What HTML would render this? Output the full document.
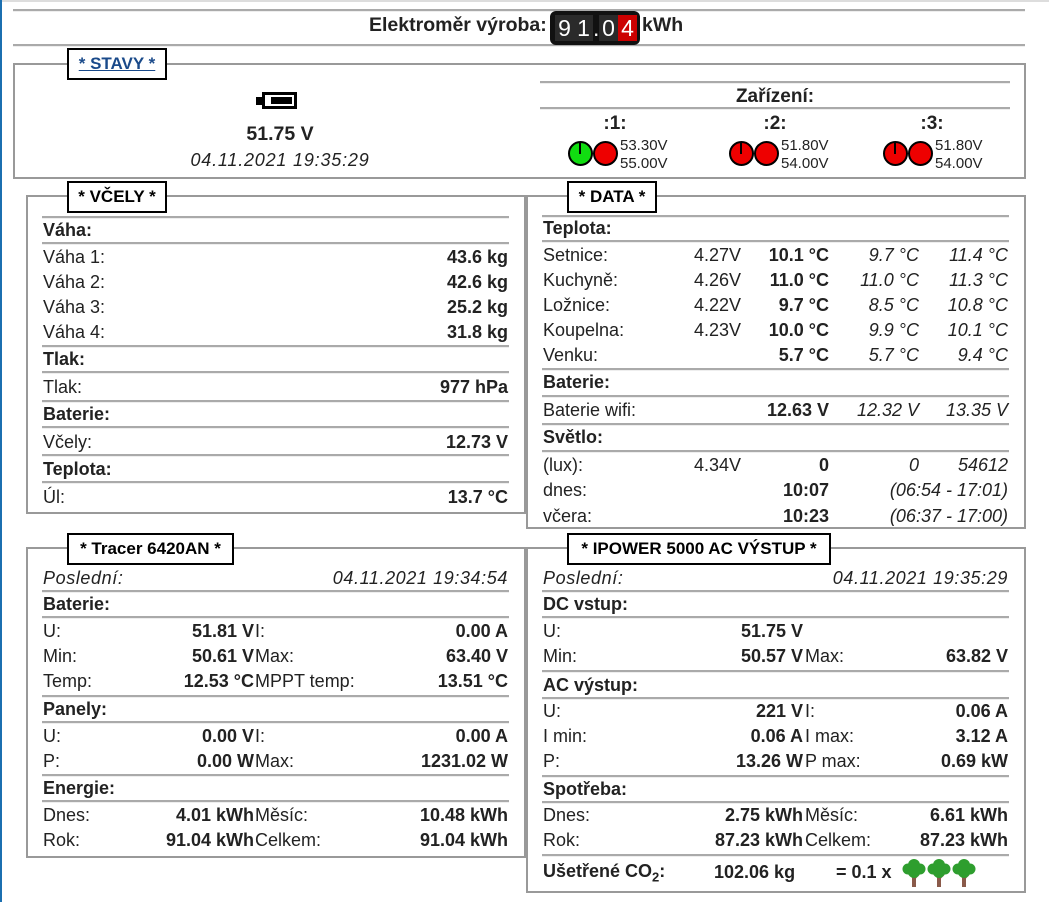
<!DOCTYPE html>
<html><head><meta charset="utf-8"><style>
body{margin:0;width:1049px;height:902px;position:relative;background:#fff;font-family:"Liberation Sans",Arial,sans-serif;color:#222;overflow:hidden}
.t{position:absolute;font-size:18px;line-height:25px;white-space:nowrap}
.r{text-align:right}
b,.b{font-weight:bold}
.i{font-style:italic}
.box{position:absolute;border:2px solid #999;box-sizing:border-box}
.lg{position:absolute;border:2px solid #000;background:#fff;box-sizing:border-box;font-weight:bold;font-size:17px;text-align:center;line-height:27px;color:#000}
.hl{position:absolute;height:2px;background:#aaa;border-bottom:1px solid #eee}
.h{font-weight:bold;color:#222}
.dot{position:absolute;width:21px;height:21px;border:2px solid #000;border-radius:50%;box-sizing:content-box}
.dot.p:after{content:"";position:absolute;left:9px;top:0;width:2px;height:11px;background:#000}
.sm{position:absolute;font-size:15px;line-height:18px}
.pd{font-size:18px;letter-spacing:0.6px}
</style></head><body>
<div style="position:absolute;left:0;top:0;width:2px;height:902px;background:#1b6fb0"></div>
<div style="position:absolute;left:2px;top:0;width:1047px;height:2px;background:#ddd"></div>
<div class="hl" style="left:13px;width:1012px;top:9px"></div>
<div class="hl" style="left:13px;width:1012px;top:44px"></div>
<div class="t b" style="left:369px;top:13px;font-size:19.5px">Elektroměr výroba:</div>
<div style="position:absolute;left:550px;top:11px;width:90px;height:34px;background:#111;border-radius:6px"></div>
<div style="position:absolute;left:555px;top:15px;height:26px;font-size:23px;line-height:26px;color:#fff;font-family:'Liberation Sans',sans-serif">
<span style="display:inline-block;width:19px;text-align:center;background:#2a2a2a">9</span><span style="display:inline-block;width:19px;text-align:center;background:#2a2a2a">1</span><span style="display:inline-block;width:6px">.</span><span style="display:inline-block;width:19px;text-align:center;background:#2a2a2a">0</span><span style="display:inline-block;width:19px;text-align:center;background:#c00">4</span></div>
<div class="t b" style="left:642px;top:13px;font-size:19.5px">kWh</div>

<!-- STAVY -->
<div class="box" style="left:13px;top:63px;width:1013px;height:116px"></div>
<div class="lg" style="left:67px;top:48px;width:100px;height:32px"><span style="color:#1a4a8a;text-decoration:underline">* STAVY *</span></div>
<div style="position:absolute;left:256px;top:97px;width:7px;height:8px;background:#000"></div>
<div style="position:absolute;left:262px;top:92px;width:35px;height:17px;background:#000"></div>
<div style="position:absolute;left:265px;top:95px;width:29px;height:11px;background:#fff"></div>
<div style="position:absolute;left:271px;top:97px;width:21px;height:7px;background:#000"></div>
<div class="t b" style="left:200px;width:160px;text-align:center;top:122px;font-size:19.5px">51.75 V</div>
<div class="t i" style="left:150px;width:260px;text-align:center;top:148px;font-size:18px;letter-spacing:0.8px">04.11.2021 19:35:29</div>
<div class="hl" style="left:540px;width:470px;top:81px"></div>
<div class="hl" style="left:540px;width:470px;top:107px"></div>
<div class="t b" style="left:540px;width:470px;text-align:center;top:84px;font-size:19px">Zařízení:</div>
<div class="t b" style="left:585px;width:60px;text-align:center;top:111px;font-size:19px">:1:</div>
<div class="t b" style="left:745px;width:60px;text-align:center;top:111px;font-size:19px">:2:</div>
<div class="t b" style="left:902px;width:60px;text-align:center;top:111px;font-size:19px">:3:</div>
<div class="dot p" style="left:568px;top:141px;background:#1d1"></div>
<div class="dot" style="left:593px;top:141px;background:#e00"></div>
<div class="sm" style="left:620px;top:137px">53.30V<br>55.00V</div>
<div class="dot p" style="left:729px;top:141px;background:#e00"></div>
<div class="dot" style="left:754px;top:141px;background:#e00"></div>
<div class="sm" style="left:781px;top:137px">51.80V<br>54.00V</div>
<div class="dot p" style="left:883px;top:141px;background:#e00"></div>
<div class="dot" style="left:908px;top:141px;background:#e00"></div>
<div class="sm" style="left:935px;top:137px">51.80V<br>54.00V</div>

<!-- VCELY -->
<div class="box" style="left:26px;top:195px;width:500px;height:319px"></div>
<div class="lg" style="left:67px;top:181px;width:100px;height:32px">* VČELY *</div>
<div class="hl" style="left:42px;width:467px;top:216px"></div>
<div class="t h" style="left:43px;top:218px">Váha:</div>
<div class="hl" style="left:42px;width:467px;top:242px"></div>
<div class="t" style="left:43px;top:245px">Váha 1:</div><div class="t b r" style="right:541px;top:245px">43.6 kg</div>
<div class="t" style="left:43px;top:270px">Váha 2:</div><div class="t b r" style="right:541px;top:270px">42.6 kg</div>
<div class="t" style="left:43px;top:295px">Váha 3:</div><div class="t b r" style="right:541px;top:295px">25.2 kg</div>
<div class="t" style="left:43px;top:320px">Váha 4:</div><div class="t b r" style="right:541px;top:320px">31.8 kg</div>
<div class="hl" style="left:42px;width:467px;top:345px"></div>
<div class="t h" style="left:43px;top:347px">Tlak:</div>
<div class="hl" style="left:42px;width:467px;top:371px"></div>
<div class="t" style="left:43px;top:375px">Tlak:</div><div class="t b r" style="right:541px;top:375px">977 hPa</div>
<div class="hl" style="left:42px;width:467px;top:400px"></div>
<div class="t h" style="left:43px;top:402px">Baterie:</div>
<div class="hl" style="left:42px;width:467px;top:426px"></div>
<div class="t" style="left:43px;top:430px">Včely:</div><div class="t b r" style="right:541px;top:430px">12.73 V</div>
<div class="hl" style="left:42px;width:467px;top:454px"></div>
<div class="t h" style="left:43px;top:457px">Teplota:</div>
<div class="hl" style="left:42px;width:467px;top:481px"></div>
<div class="t" style="left:43px;top:485px">Úl:</div><div class="t b r" style="right:541px;top:485px">13.7 °C</div>

<!-- DATA -->
<div class="box" style="left:526px;top:195px;width:500px;height:334px"></div>
<div class="lg" style="left:567px;top:181px;width:90px;height:32px">* DATA *</div>
<div class="hl" style="left:542px;width:467px;top:215px"></div>
<div class="t h" style="left:543px;top:216px">Teplota:</div>
<div class="hl" style="left:542px;width:467px;top:240px"></div>
<div class="t" style="left:543px;top:243px">Setnice:</div><div class="t r" style="right:308px;top:243px">4.27V</div><div class="t b r" style="right:220px;top:243px">10.1 °C</div><div class="t i r" style="right:130px;top:243px">9.7 °C</div><div class="t i r" style="right:41px;top:243px">11.4 °C</div>
<div class="t" style="left:543px;top:268px">Kuchyně:</div><div class="t r" style="right:308px;top:268px">4.26V</div><div class="t b r" style="right:220px;top:268px">11.0 °C</div><div class="t i r" style="right:130px;top:268px">11.0 °C</div><div class="t i r" style="right:41px;top:268px">11.3 °C</div>
<div class="t" style="left:543px;top:293px">Ložnice:</div><div class="t r" style="right:308px;top:293px">4.22V</div><div class="t b r" style="right:220px;top:293px">9.7 °C</div><div class="t i r" style="right:130px;top:293px">8.5 °C</div><div class="t i r" style="right:41px;top:293px">10.8 °C</div>
<div class="t" style="left:543px;top:318px">Koupelna:</div><div class="t r" style="right:308px;top:318px">4.23V</div><div class="t b r" style="right:220px;top:318px">10.0 °C</div><div class="t i r" style="right:130px;top:318px">9.9 °C</div><div class="t i r" style="right:41px;top:318px">10.1 °C</div>
<div class="t" style="left:543px;top:343px">Venku:</div><div class="t b r" style="right:220px;top:343px">5.7 °C</div><div class="t i r" style="right:130px;top:343px">5.7 °C</div><div class="t i r" style="right:41px;top:343px">9.4 °C</div>
<div class="hl" style="left:542px;width:467px;top:368px"></div>
<div class="t h" style="left:543px;top:370px">Baterie:</div>
<div class="hl" style="left:542px;width:467px;top:395px"></div>
<div class="t" style="left:543px;top:398px">Baterie wifi:</div><div class="t b r" style="right:220px;top:398px">12.63 V</div><div class="t i r" style="right:130px;top:398px">12.32 V</div><div class="t i r" style="right:41px;top:398px">13.35 V</div>
<div class="hl" style="left:542px;width:467px;top:423px"></div>
<div class="t h" style="left:543px;top:425px">Světlo:</div>
<div class="hl" style="left:542px;width:467px;top:450px"></div>
<div class="t" style="left:543px;top:453px">(lux):</div><div class="t r" style="right:308px;top:453px">4.34V</div><div class="t b r" style="right:220px;top:453px">0</div><div class="t i r" style="right:130px;top:453px">0</div><div class="t i r" style="right:41px;top:453px">54612</div>
<div class="t" style="left:543px;top:478px">dnes:</div><div class="t b r" style="right:220px;top:478px">10:07</div><div class="t i r" style="right:41px;top:478px">(06:54 - 17:01)</div>
<div class="t" style="left:543px;top:504px">včera:</div><div class="t b r" style="right:220px;top:504px">10:23</div><div class="t i r" style="right:41px;top:504px">(06:37 - 17:00)</div>

<!-- TRACER -->
<div class="box" style="left:26px;top:547px;width:500px;height:311px"></div>
<div class="lg" style="left:67px;top:533px;width:167px;height:32px">* Tracer 6420AN *</div>
<div class="t i pd" style="left:43px;top:566px">Poslední:</div><div class="t i r pd" style="right:541px;top:566px">04.11.2021 19:34:54</div>
<div class="hl" style="left:42px;width:467px;top:590px"></div>
<div class="t h" style="left:43px;top:592px">Baterie:</div>
<div class="hl" style="left:42px;width:467px;top:616px"></div>
<div class="t" style="left:43px;top:619px">U:</div><div class="t b r" style="right:795px;top:619px">51.81 V</div><div class="t" style="left:255px;top:619px">I:</div><div class="t b r" style="right:541px;top:619px">0.00 A</div>
<div class="t" style="left:43px;top:644px">Min:</div><div class="t b r" style="right:795px;top:644px">50.61 V</div><div class="t" style="left:255px;top:644px">Max:</div><div class="t b r" style="right:541px;top:644px">63.40 V</div>
<div class="t" style="left:43px;top:669px">Temp:</div><div class="t b r" style="right:795px;top:669px">12.53 °C</div><div class="t" style="left:255px;top:669px">MPPT temp:</div><div class="t b r" style="right:541px;top:669px">13.51 °C</div>
<div class="hl" style="left:42px;width:467px;top:695px"></div>
<div class="t h" style="left:43px;top:697px">Panely:</div>
<div class="hl" style="left:42px;width:467px;top:721px"></div>
<div class="t" style="left:43px;top:724px">U:</div><div class="t b r" style="right:795px;top:724px">0.00 V</div><div class="t" style="left:255px;top:724px">I:</div><div class="t b r" style="right:541px;top:724px">0.00 A</div>
<div class="t" style="left:43px;top:749px">P:</div><div class="t b r" style="right:795px;top:749px">0.00 W</div><div class="t" style="left:255px;top:749px">Max:</div><div class="t b r" style="right:541px;top:749px">1231.02 W</div>
<div class="hl" style="left:42px;width:467px;top:774px"></div>
<div class="t h" style="left:43px;top:776px">Energie:</div>
<div class="hl" style="left:42px;width:467px;top:800px"></div>
<div class="t" style="left:43px;top:803px">Dnes:</div><div class="t b r" style="right:795px;top:803px">4.01 kWh</div><div class="t" style="left:255px;top:803px">Měsíc:</div><div class="t b r" style="right:541px;top:803px">10.48 kWh</div>
<div class="t" style="left:43px;top:828px">Rok:</div><div class="t b r" style="right:795px;top:828px">91.04 kWh</div><div class="t" style="left:255px;top:828px">Celkem:</div><div class="t b r" style="right:541px;top:828px">91.04 kWh</div>

<!-- IPOWER -->
<div class="box" style="left:526px;top:547px;width:500px;height:346px"></div>
<div class="lg" style="left:567px;top:533px;width:264px;height:32px">* IPOWER 5000 AC VÝSTUP *</div>
<div class="t i pd" style="left:543px;top:566px">Poslední:</div><div class="t i r pd" style="right:41px;top:566px">04.11.2021 19:35:29</div>
<div class="hl" style="left:542px;width:467px;top:590px"></div>
<div class="t h" style="left:543px;top:592px">DC vstup:</div>
<div class="hl" style="left:542px;width:467px;top:616px"></div>
<div class="t" style="left:543px;top:619px">U:</div><div class="t b r" style="right:246px;top:619px">51.75 V</div>
<div class="t" style="left:543px;top:644px">Min:</div><div class="t b r" style="right:246px;top:644px">50.57 V</div><div class="t" style="left:805px;top:644px">Max:</div><div class="t b r" style="right:41px;top:644px">63.82 V</div>
<div class="hl" style="left:542px;width:467px;top:670px"></div>
<div class="t h" style="left:543px;top:673px">AC výstup:</div>
<div class="hl" style="left:542px;width:467px;top:697px"></div>
<div class="t" style="left:543px;top:699px">U:</div><div class="t b r" style="right:246px;top:699px">221 V</div><div class="t" style="left:805px;top:699px">I:</div><div class="t b r" style="right:41px;top:699px">0.06 A</div>
<div class="t" style="left:543px;top:724px">I min:</div><div class="t b r" style="right:246px;top:724px">0.06 A</div><div class="t" style="left:805px;top:724px">I max:</div><div class="t b r" style="right:41px;top:724px">3.12 A</div>
<div class="t" style="left:543px;top:749px">P:</div><div class="t b r" style="right:246px;top:749px">13.26 W</div><div class="t" style="left:805px;top:749px">P max:</div><div class="t b r" style="right:41px;top:749px">0.69 kW</div>
<div class="hl" style="left:542px;width:467px;top:775px"></div>
<div class="t h" style="left:543px;top:777px">Spotřeba:</div>
<div class="hl" style="left:542px;width:467px;top:801px"></div>
<div class="t" style="left:543px;top:803px">Dnes:</div><div class="t b r" style="right:246px;top:803px">2.75 kWh</div><div class="t" style="left:805px;top:803px">Měsíc:</div><div class="t b r" style="right:41px;top:803px">6.61 kWh</div>
<div class="t" style="left:543px;top:828px">Rok:</div><div class="t b r" style="right:246px;top:828px">87.23 kWh</div><div class="t" style="left:805px;top:828px">Celkem:</div><div class="t b r" style="right:41px;top:828px">87.23 kWh</div>
<div class="hl" style="left:542px;width:467px;top:854px"></div>
<div class="t b" style="left:543px;top:859px">Ušetřené CO<sub style="font-size:13px;line-height:0">2</sub>:</div>
<div class="t b" style="left:714px;top:860px">102.06 kg</div>
<div class="t b" style="left:836px;top:860px">= 0.1 x</div>
<svg style="position:absolute;left:902px;top:859px" width="76" height="29" viewBox="0 0 76 29">
<g id="tr"><rect x="10" y="16" width="4" height="12" fill="#8a5a4a"/><path d="M12 19 L7 15 M12 20 L17 15" stroke="#8a5a4a" stroke-width="2"/><circle cx="6" cy="10" r="5.5" fill="#2e9e2e"/><circle cx="18" cy="10" r="5.5" fill="#2e9e2e"/><circle cx="12" cy="6" r="6" fill="#2e9e2e"/><circle cx="12" cy="13" r="6" fill="#2e9e2e"/></g>
<use href="#tr" x="25"/><use href="#tr" x="50"/>
</svg>
</body></html>
